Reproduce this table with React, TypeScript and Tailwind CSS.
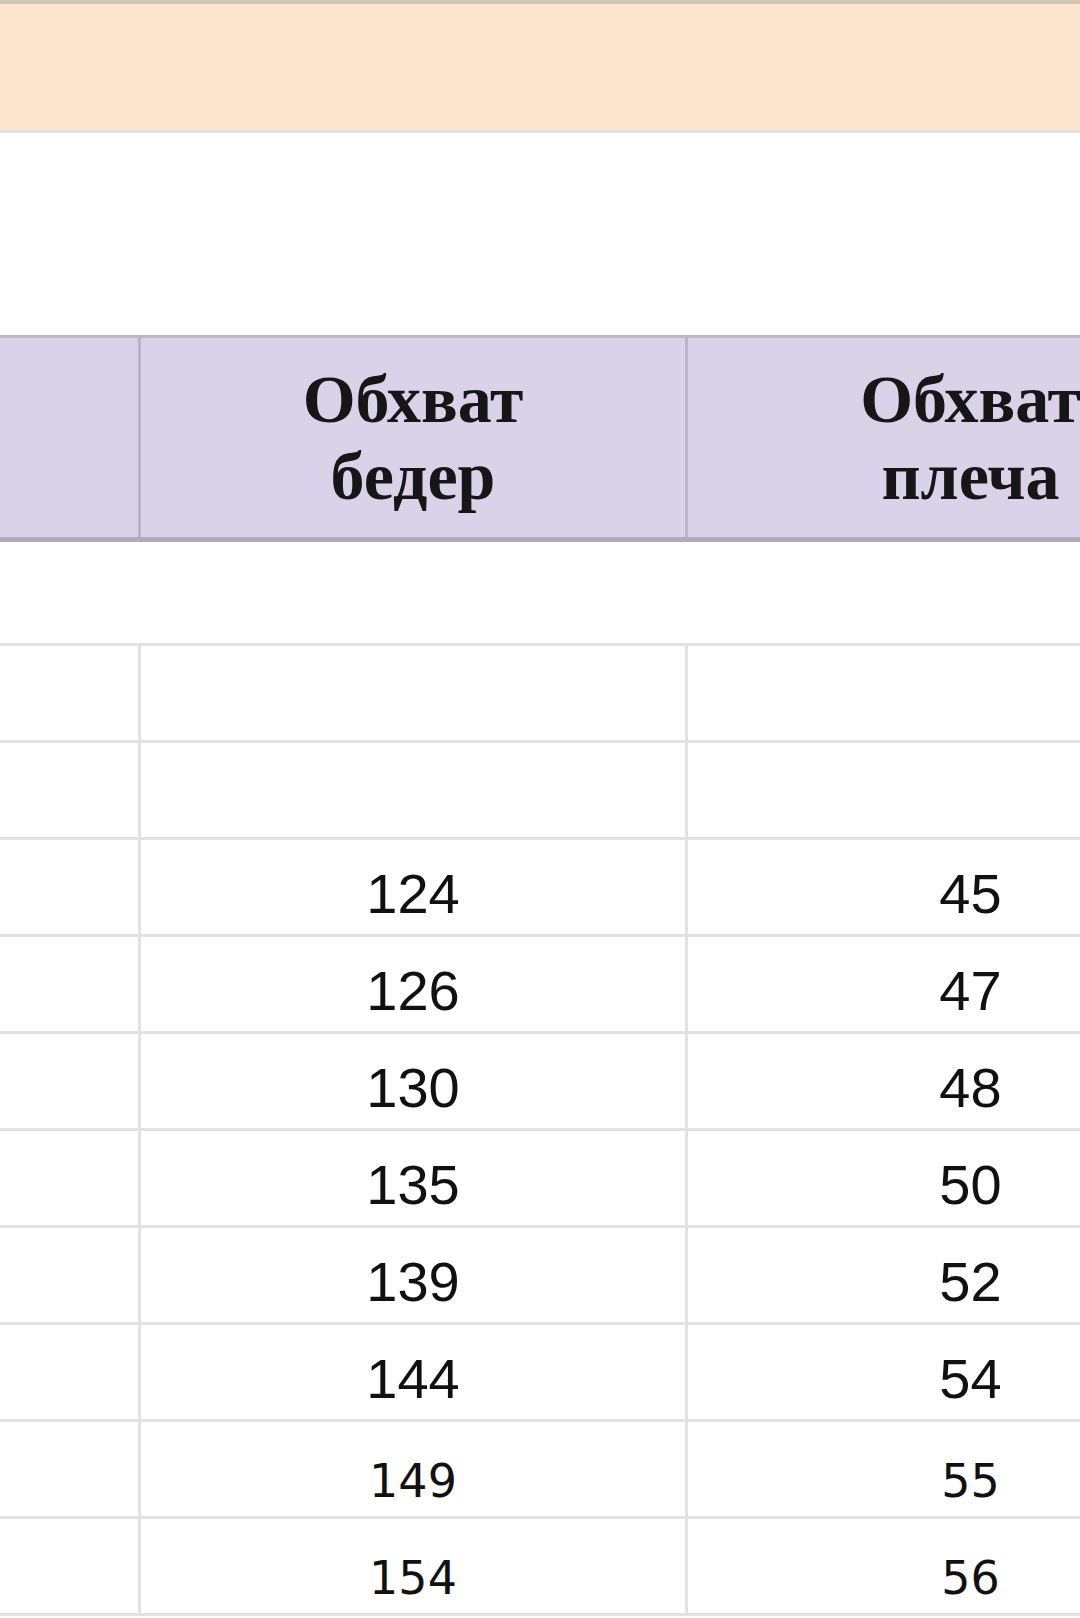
import React from 'react';

type Row = { hips: string; shoulder: string; small?: boolean };

const rows: Row[] = [
  { hips: '', shoulder: '' },
  { hips: '', shoulder: '' },
  { hips: '124', shoulder: '45' },
  { hips: '126', shoulder: '47' },
  { hips: '130', shoulder: '48' },
  { hips: '135', shoulder: '50' },
  { hips: '139', shoulder: '52' },
  { hips: '144', shoulder: '54' },
  { hips: '149', shoulder: '55', small: true },
  { hips: '154', shoulder: '56', small: true },
];

const HeaderCell: React.FC<{ lines: string[]; first?: boolean }> = ({ lines, first }) => (
  <div
    className={`flex flex-col items-center justify-center text-center whitespace-nowrap text-[68px] leading-[77px] font-bold text-[#161616] ${
      first ? '' : 'border-l-[3px] border-[#bab3ca]'
    }`}
    style={{ fontFamily: '"Liberation Serif", "Times New Roman", serif' }}
  >
    {lines.map((l) => (
      <span key={l}>{l}</span>
    ))}
  </div>
);

const NumCell: React.FC<{ value: string; small?: boolean }> = ({ value, small }) => (
  <div className="flex items-end justify-center border-l-[3px] border-[#e2e2e2] pb-[12px] whitespace-nowrap">
    {small ? (
      <span
        className="text-[46px] leading-[46px] text-[#111]"
        style={{ fontFamily: '"DejaVu Sans", Verdana, sans-serif' }}
      >
        {value}
      </span>
    ) : (
      <span
        className="text-[56px] leading-[56px] text-[#111]"
        style={{ fontFamily: '"Liberation Sans", Arial, sans-serif' }}
      >
        {value}
      </span>
    )}
  </div>
);

export default function App() {
  return (
    <div className="w-[1080px] h-[1618px] overflow-hidden bg-white">
      {/* top band */}
      <div className="h-[4px] bg-[#d3c5b4]" />
      <div className="h-[126px] bg-[#fce5cd]" />
      <div className="h-[3px] bg-[#e3dfdb]" />
      <div className="h-[202px]" />

      {/* header */}
      <div className="grid grid-cols-[138px_547px_568px] h-[207px] bg-[#d9d2e9] border-t-[3px] border-b-[5px] border-t-[#bdb8c6] border-b-[#afabb8]">
        <HeaderCell lines={[]} first />
        <HeaderCell lines={['Обхват', 'бедер']} />
        <HeaderCell lines={['Обхват', 'плеча']} />
      </div>

      <div className="h-[101px]" />

      {/* body */}
      <div className="border-b-[3px] border-[#e2e2e2]">
        {rows.map((r, i) => (
          <div
            key={i}
            className="grid grid-cols-[138px_547px_568px] h-[97px] border-t-[3px] border-[#e2e2e2]"
          >
            <div />
            <NumCell value={r.hips} small={r.small} />
            <NumCell value={r.shoulder} small={r.small} />
          </div>
        ))}
      </div>
    </div>
  );
}
